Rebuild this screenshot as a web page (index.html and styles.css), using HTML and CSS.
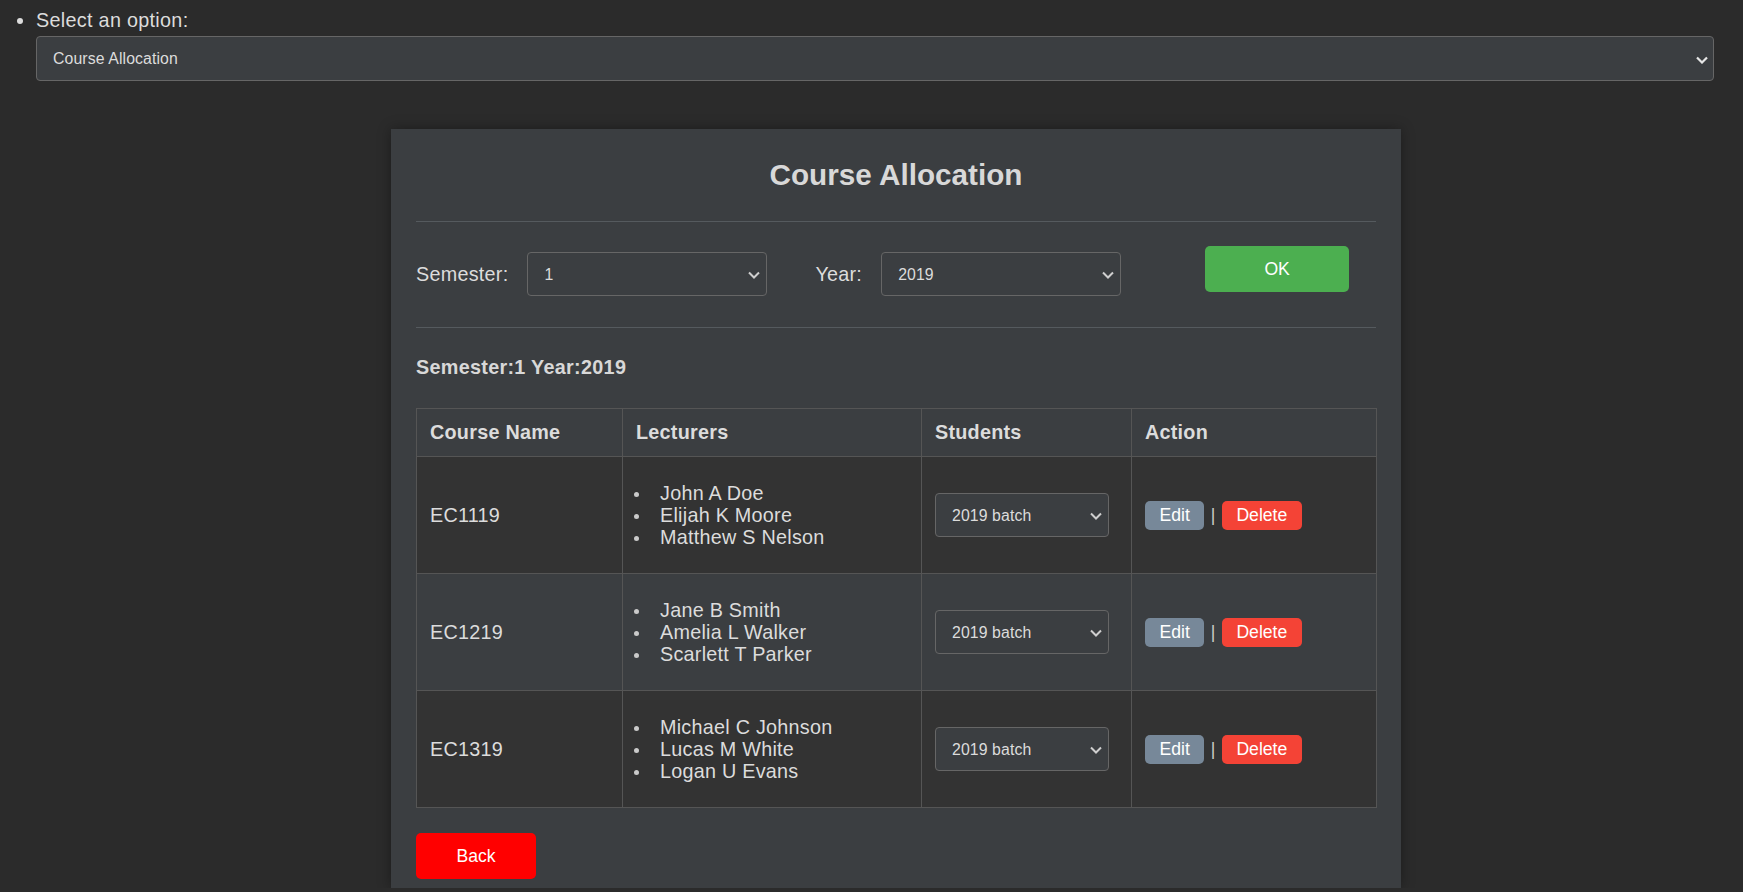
FILE: index.html
```html
<!DOCTYPE html>
<html lang="en">
<head>
<meta charset="utf-8">
<title>Course Allocation</title>
<link rel="stylesheet" href="styles.css">
</head>
<body>
<ul class="menu">
  <li class="menu-item">
    <div class="menu-label">Select an option:</div>
    <div class="select-wrap select-wide">
      <select class="select select-main"><option>Course Allocation</option></select>
      <svg class="chev chev-main" width="12" height="8" viewBox="0 0 12 8"><path d="M1 1.5l5 5 5-5"/></svg>
    </div>
  </li>
</ul>

<section class="card">
  <h2 class="card-title">Course Allocation</h2>
  <div class="rule rule-top"></div>

  <div class="filter-row">
    <div class="field">
      <span class="field-label">Semester:</span>
      <div class="select-wrap select-filter">
        <select class="select"><option>1</option></select>
        <svg class="chev" width="12" height="8" viewBox="0 0 12 8"><path d="M1 1.5l5 5 5-5"/></svg>
      </div>
    </div>
    <div class="field field-year">
      <span class="field-label">Year:</span>
      <div class="select-wrap select-filter">
        <select class="select"><option>2019</option></select>
        <svg class="chev" width="12" height="8" viewBox="0 0 12 8"><path d="M1 1.5l5 5 5-5"/></svg>
      </div>
    </div>
    <button class="btn btn-ok">OK</button>
  </div>

  <div class="rule rule-mid"></div>

  <p class="summary">Semester:1 Year:2019</p>

  <table class="alloc">
    <colgroup>
      <col class="c1"><col class="c2"><col class="c3"><col class="c4">
    </colgroup>
    <thead>
      <tr><th>Course Name</th><th>Lecturers</th><th>Students</th><th>Action</th></tr>
    </thead>
    <tbody>
      <tr>
        <td>EC1119</td>
        <td><ul class="lect"><li>John A Doe</li><li>Elijah K Moore</li><li>Matthew S Nelson</li></ul></td>
        <td>
          <div class="select-wrap select-batch">
            <select class="select"><option>2019 batch</option></select>
            <svg class="chev" width="12" height="8" viewBox="0 0 12 8"><path d="M1 1.5l5 5 5-5"/></svg>
          </div>
        </td>
        <td><div class="actions"><button class="btn btn-edit">Edit</button><span class="sep">|</span><button class="btn btn-del">Delete</button></div></td>
      </tr>
      <tr>
        <td>EC1219</td>
        <td><ul class="lect"><li>Jane B Smith</li><li>Amelia L Walker</li><li>Scarlett T Parker</li></ul></td>
        <td>
          <div class="select-wrap select-batch">
            <select class="select"><option>2019 batch</option></select>
            <svg class="chev" width="12" height="8" viewBox="0 0 12 8"><path d="M1 1.5l5 5 5-5"/></svg>
          </div>
        </td>
        <td><div class="actions"><button class="btn btn-edit">Edit</button><span class="sep">|</span><button class="btn btn-del">Delete</button></div></td>
      </tr>
      <tr>
        <td>EC1319</td>
        <td><ul class="lect"><li>Michael C Johnson</li><li>Lucas M White</li><li>Logan U Evans</li></ul></td>
        <td>
          <div class="select-wrap select-batch">
            <select class="select"><option>2019 batch</option></select>
            <svg class="chev" width="12" height="8" viewBox="0 0 12 8"><path d="M1 1.5l5 5 5-5"/></svg>
          </div>
        </td>
        <td><div class="actions"><button class="btn btn-edit">Edit</button><span class="sep">|</span><button class="btn btn-del">Delete</button></div></td>
      </tr>
    </tbody>
  </table>

  <button class="btn btn-back">Back</button>
</section>
</body>
</html>
```

FILE: styles.css
```css
* { box-sizing: border-box; }

html, body {
  margin: 0;
  background: #2b2b2b;
}

body {
  font-family: "Liberation Sans", Arial, sans-serif;
  color: #dcdcdc;
}

.menu {
  margin: 0;
  padding: 9px 29px 0 36px;
  list-style: disc;
}

.menu-item {
  font-size: 19.8px;
  line-height: 23px;
}

.menu-label {
  height: 23px;
  letter-spacing: 0.3px;
}

.select-wrap {
  position: relative;
}

.select {
  -webkit-appearance: none;
  appearance: none;
  display: block;
  width: 100%;
  height: 100%;
  margin: 0;
  background: #3b3e41;
  color: #dcdcdc;
  border: 1px solid #666;
  border-radius: 4px;
  font-family: "Liberation Sans", Arial, sans-serif;
  font-size: 15.84px;
  letter-spacing: 0.1px;
  padding: 0 30px 0 16px;
  outline: none;
}

.chev {
  position: absolute;
  top: 50%;
  right: 7px;
  margin-top: -3px;
  pointer-events: none;
}

.chev path {
  fill: none;
  stroke: #cfcfcf;
  stroke-width: 2;
}

.select-wide {
  margin-top: 4px;
  width: 100%;
  height: 45px;
}

.chev-main { right: 6px; }
.chev-main path { stroke: #e6e6e6; stroke-width: 2.2; }

.card {
  width: 1010px;
  margin: 48px 0 0 391px;
  padding: 24px 25px 9px;
  background: #3b3e41;
  box-shadow: 0 0 12px rgba(0, 0, 0, 0.35);
}

.card-title {
  margin: 5px 0 0;
  font-size: 29.7px;
  line-height: 34px;
  font-weight: bold;
  text-align: center;
  color: #d8d8d8;
}

.rule {
  height: 0;
  border-top: 1px solid #555a5e;
}

.rule-top { margin-top: 29px; }
.rule-mid { margin-top: 31px; }

.filter-row {
  display: flex;
  align-items: flex-start;
  margin-top: 24px;
}

.field {
  display: flex;
  align-items: center;
  height: 44px;
  margin-top: 6px;
  font-size: 19.8px;
  letter-spacing: 0.25px;
}

.field-label {
  margin-right: 19px;
}

.field-year {
  margin-left: 48px;
}

.select-filter {
  width: 240px;
  height: 44px;
}

.btn {
  border: none;
  font-family: "Liberation Sans", Arial, sans-serif;
  color: #fff;
  cursor: pointer;
}

.btn-ok {
  margin-left: 84px;
  width: 144px;
  height: 46px;
  background: #4caf50;
  border-radius: 5px;
  font-size: 17.6px;
}

.summary {
  margin: 28px 0 0;
  font-size: 19.8px;
  line-height: 23px;
  font-weight: bold;
  letter-spacing: 0.3px;
  color: #d8d8d8;
}

.alloc {
  margin-top: 29px;
  width: 960px;
  border-collapse: collapse;
  table-layout: fixed;
  font-size: 19.8px;
  letter-spacing: 0.25px;
}

.c1 { width: 206px; }
.c2 { width: 299px; }
.c3 { width: 210px; }
.c4 { width: 245px; }

.alloc th,
.alloc td {
  border: 1px solid #555;
  padding: 0 13px;
  text-align: left;
  vertical-align: middle;
}

.alloc th {
  height: 48px;
  font-weight: bold;
  background: #3b3e41;
  color: #dcdcdc;
}

.alloc td {
  height: 117px;
  line-height: 22px;
}

.alloc tbody tr:nth-child(odd) td { background: #333333; }
.alloc tbody tr:nth-child(even) td { background: #3b3e41; }

.lect {
  margin: 0;
  padding: 0;
  list-style: none;
}

.lect li {
  padding-left: 24px;
}

.lect li::before {
  content: "";
  display: inline-block;
  width: 5px;
  height: 5px;
  margin-left: -26px;
  margin-right: 21px;
  border-radius: 50%;
  background: #cacaca;
  vertical-align: middle;
}

.select-batch {
  width: 174px;
  height: 44px;
}

.actions {
  display: flex;
  align-items: center;
  gap: 6.5px;
  letter-spacing: 0;
}

.btn-edit,
.btn-del {
  height: 29px;
  padding: 0 14.5px;
  border-radius: 5px;
  font-size: 17.6px;
  line-height: 29px;
}

.btn-edit { background: #778899; }
.btn-del { background: #f44336; }

.sep {
  color: #cccccc;
  font-size: 17.6px;
}

.btn-back {
  display: block;
  margin-top: 25px;
  width: 120px;
  height: 46px;
  background: #ff0000;
  border-radius: 5px;
  font-size: 17.6px;
}
```
